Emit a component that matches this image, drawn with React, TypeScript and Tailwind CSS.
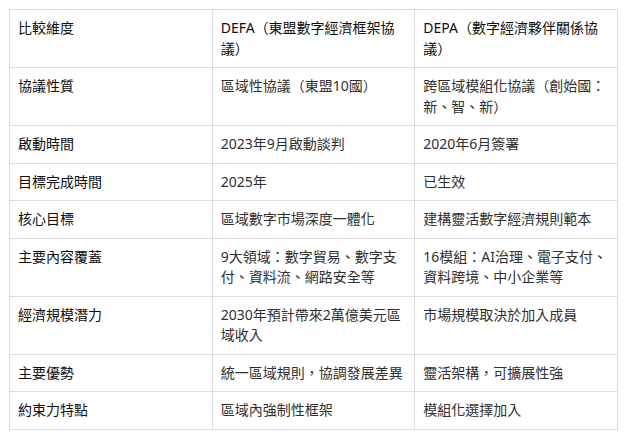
const rows: [string, string, string][] = [
  ["協議性質", "區域性協議（東盟10國）", "跨區域模組化協議（創始國：新、智、新）"],
  ["啟動時間", "2023年9月啟動談判", "2020年6月簽署"],
  ["目標完成時間", "2025年", "已生效"],
  ["核心目標", "區域數字市場深度一體化", "建構靈活數字經濟規則範本"],
  ["主要內容覆蓋", "9大領域：數字貿易、數字支付、資料流、網路安全等", "16模組：AI治理、電子支付、資料跨境、中小企業等"],
  ["經濟規模潛力", "2030年預計帶來2萬億美元區域收入", "市場規模取決於加入成員"],
  ["主要優勢", "統一區域規則，協調發展差異", "靈活架構，可擴展性強"],
  ["約束力特點", "區域內強制性框架", "模組化選擇加入"],
];

const cell = "border border-[#dcdcdf] px-2 py-2 align-top text-left font-normal";

export default function App() {
  return (
    <div
      className="min-h-screen bg-white pl-[9px] pt-[9px] text-[14px] leading-[20.5px]"
      style={{ fontFamily: '"Noto Sans", "Noto Sans CJK TC", sans-serif' }}
    >
      <table className="w-[609px] table-fixed border-collapse">
        <thead>
          <tr className="text-[#0d0d0d]">
            <th className={cell}>比較維度</th>
            <th className={cell}>DEFA（東盟數字經濟框架協議）</th>
            <th className={cell}>DEPA（數字經濟夥伴關係協議）</th>
          </tr>
        </thead>
        <tbody>
          {rows.map(([label, defa, depa]) => (
            <tr key={label}>
              <td className={`${cell} text-[#0d0d0d]`}>{label}</td>
              <td className={`${cell} text-[#303030]`}>{defa}</td>
              <td className={`${cell} text-[#303030]`}>{depa}</td>
            </tr>
          ))}
        </tbody>
      </table>
    </div>
  );
}
